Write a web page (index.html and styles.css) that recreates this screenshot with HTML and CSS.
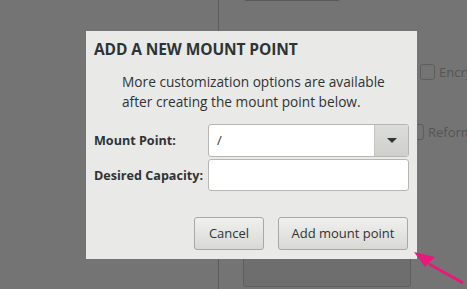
FILE: index.html
```html
<!DOCTYPE html>
<html>
<head>
<meta charset="utf-8">
<link rel="stylesheet" href="styles.css">
</head>
<body>
<div class="bg">
  <div class="vline vline-top"></div>
  <div class="topbox"></div>
  <div class="vline vline-bottom"></div>
  <div class="bottombox"></div>
  <div class="check check-encrypt"><span class="box"></span><span class="lbl">Encry</span></div>
  <div class="check check-reformat"><span class="box checked"></span><span class="lbl">Reform</span></div>
</div>

<div class="dialog">
  <h1 class="title">ADD A NEW MOUNT POINT</h1>
  <p class="desc">More customization options are available<br>after creating the mount point below.</p>
  <div class="form">
    <label class="flabel">Mount Point:</label>
    <div class="combo">
      <div class="combo-entry">/</div>
      <div class="combo-btn"><svg width="10" height="6" viewBox="0 0 10 6"><path d="M0 0 L10 0 L5 5 Z" fill="#2e3436"/></svg></div>
    </div>
    <label class="flabel">Desired Capacity:</label>
    <div class="entry"></div>
  </div>
  <div class="buttons">
    <div class="btn btn-cancel">Cancel</div>
    <div class="btn btn-add">Add mount point</div>
  </div>
</div>

<svg class="arrow" width="60" height="40" viewBox="0 0 60 40">
  <path d="M51 33 L17 14" stroke="#e8197a" stroke-width="3" fill="none"/>
  <path d="M2 2 L23 7 L13 17 Z" fill="#e8197a"/>
</svg>
</body>
</html>
```
FILE: styles.css
```css
html, body {
  margin: 0;
  padding: 0;
}
body {
  width: 467px;
  height: 289px;
  background: #747474;
  position: relative;
  overflow: hidden;
  font-family: "Open Sans", "DejaVu Sans", sans-serif;
  color: #2e3436;
}
.vline {
  position: absolute;
  left: 218px;
  width: 1px;
  background: #5c5c5c;
}
.vline-top { top: 0; height: 31px; }
.vline-bottom { top: 259px; height: 30px; }
.topbox {
  position: absolute;
  left: 245px;
  top: -10px;
  width: 94px;
  height: 10px;
  border-bottom: 1px solid #5a5a5a;
}
.bottombox {
  position: absolute;
  left: 243px;
  top: 250px;
  width: 166px;
  height: 35px;
  border: 1px solid #5e5e5e;
  border-radius: 3px;
  background: #6e6e6e;
}
.check {
  position: absolute;
  display: flex;
  align-items: center;
  gap: 4px;
  font-size: 13px;
  color: #555;
  white-space: nowrap;
}
.check .box {
  width: 13px;
  height: 14px;
  border: 1px solid #5e5e5e;
  border-radius: 3px;
}
.check-encrypt { left: 420px; top: 63px; }
.check-reformat { left: 409px; top: 123px; }
.dialog {
  position: absolute;
  left: 86px;
  top: 31px;
  width: 331px;
  height: 228px;
  box-sizing: border-box;
  background: #e9e9e7;
  padding: 8px 8px 0 8px;
}
.title {
  margin: 0;
  font-size: 15.5px;
  font-weight: 700;
  line-height: 20px;
  letter-spacing: -0.1px;
  color: #2e3436;
}
.desc {
  margin: 13px 0 0 28px;
  font-size: 13.7px;
  line-height: 20px;
  color: #2e3436;
}
.form {
  margin-top: 12px;
  display: grid;
  grid-template-columns: 114px 201px;
  grid-template-rows: 33px 32px;
  row-gap: 2px;
  align-items: center;
}
.flabel {
  font-size: 12.6px;
  font-weight: 700;
  color: #2e3436;
}
.combo {
  display: flex;
  height: 33px;
  box-sizing: border-box;
  border: 1px solid #b6b6b3;
  border-radius: 3px;
  overflow: hidden;
  background: #fff;
}
.combo-entry {
  flex: 1;
  padding-left: 8px;
  font-size: 13px;
  line-height: 31px;
}
.combo-btn {
  width: 33px;
  border-left: 1px solid #c4c4c1;
  background: linear-gradient(#dcdcda, #cfcfcc);
  display: flex;
  align-items: center;
  justify-content: center;
}
.entry {
  height: 32px;
  box-sizing: border-box;
  border: 1px solid #b6b6b3;
  border-radius: 3px;
  background: #fff;
}
.buttons {
  margin-top: 26px;
  display: flex;
  justify-content: flex-end;
  gap: 14px;
  padding-right: 1px;
}
.btn {
  height: 33px;
  box-sizing: border-box;
  border: 1px solid #a8a8a5;
  border-radius: 3px;
  background: linear-gradient(#f0f0ee, #d8d8d5);
  font-size: 13px;
  line-height: 31px;
  text-align: center;
  color: #2e3436;
}
.btn-cancel { width: 70px; }
.btn-add { width: 130px; }
.arrow {
  position: absolute;
  left: 412px;
  top: 250px;
}
```
